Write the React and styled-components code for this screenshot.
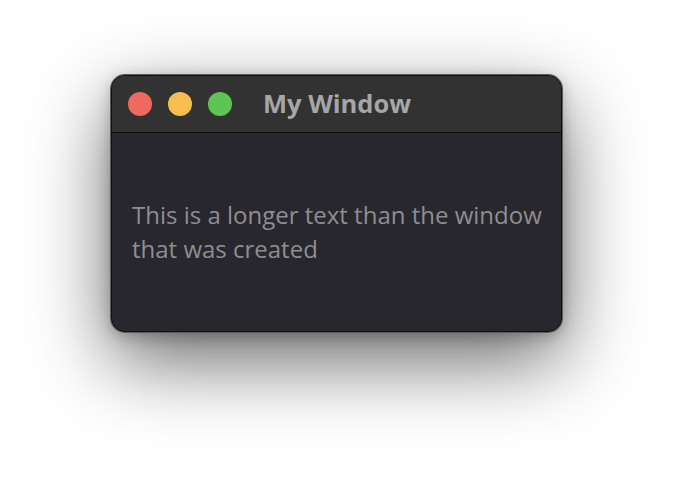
import React from 'react'
import styled, { createGlobalStyle } from 'styled-components'

const GlobalStyle = createGlobalStyle`
  html, body {
    margin: 0;
    padding: 0;
    background: #ffffff;
  }
  body {
    font-family: "Open Sans", "Noto Sans", sans-serif;
  }
`

const Desktop = styled.div`
  width: 674px;
  height: 480px;
  padding: 75px 0 0 111px;
  box-sizing: border-box;
  overflow: hidden;
`

const Window = styled.div`
  width: 451px;
  height: 257px;
  box-sizing: border-box;
  display: flex;
  flex-direction: column;
  border-radius: 14px;
  border: 1px solid #101012;
  background: #28272d;
  overflow: hidden;
  box-shadow:
    0 0 0 1px #5c5c5e,
    0 28px 80px rgba(0, 0, 0, 0.6),
    0 4px 16px rgba(0, 0, 0, 0.25);
`

const TitleBar = styled.div`
  height: 56px;
  flex-shrink: 0;
  display: flex;
  align-items: center;
  padding-left: 16px;
  background: #323232;
  border-bottom: 1px solid #0e0e10;
`

const Lights = styled.div`
  display: flex;
  gap: 16px;
  margin-right: 31px;
`

const Light = styled.span`
  width: 24px;
  height: 24px;
  border-radius: 50%;
  background: ${p => p.color};
`

const Title = styled.h1`
  margin: 0;
  font-size: 25.5px;
  font-weight: 700;
  color: #a6a6a6;
  line-height: 1;
`

const Content = styled.div`
  flex: 1;
  padding: 65px 4px 0 20px;
`

const Text = styled.p`
  margin: 0;
  font-size: 24px;
  line-height: 34px;
  color: #8e8e91;
`

export default function App() {
  return (
    <>
      <GlobalStyle />
      <Desktop>
        <Window>
          <TitleBar>
            <Lights>
              <Light color="#ee6a5e" />
              <Light color="#f6be4f" />
              <Light color="#5ec454" />
            </Lights>
            <Title>My Window</Title>
          </TitleBar>
          <Content>
            <Text>This is a longer text than the window that was created</Text>
          </Content>
        </Window>
      </Desktop>
    </>
  )
}
